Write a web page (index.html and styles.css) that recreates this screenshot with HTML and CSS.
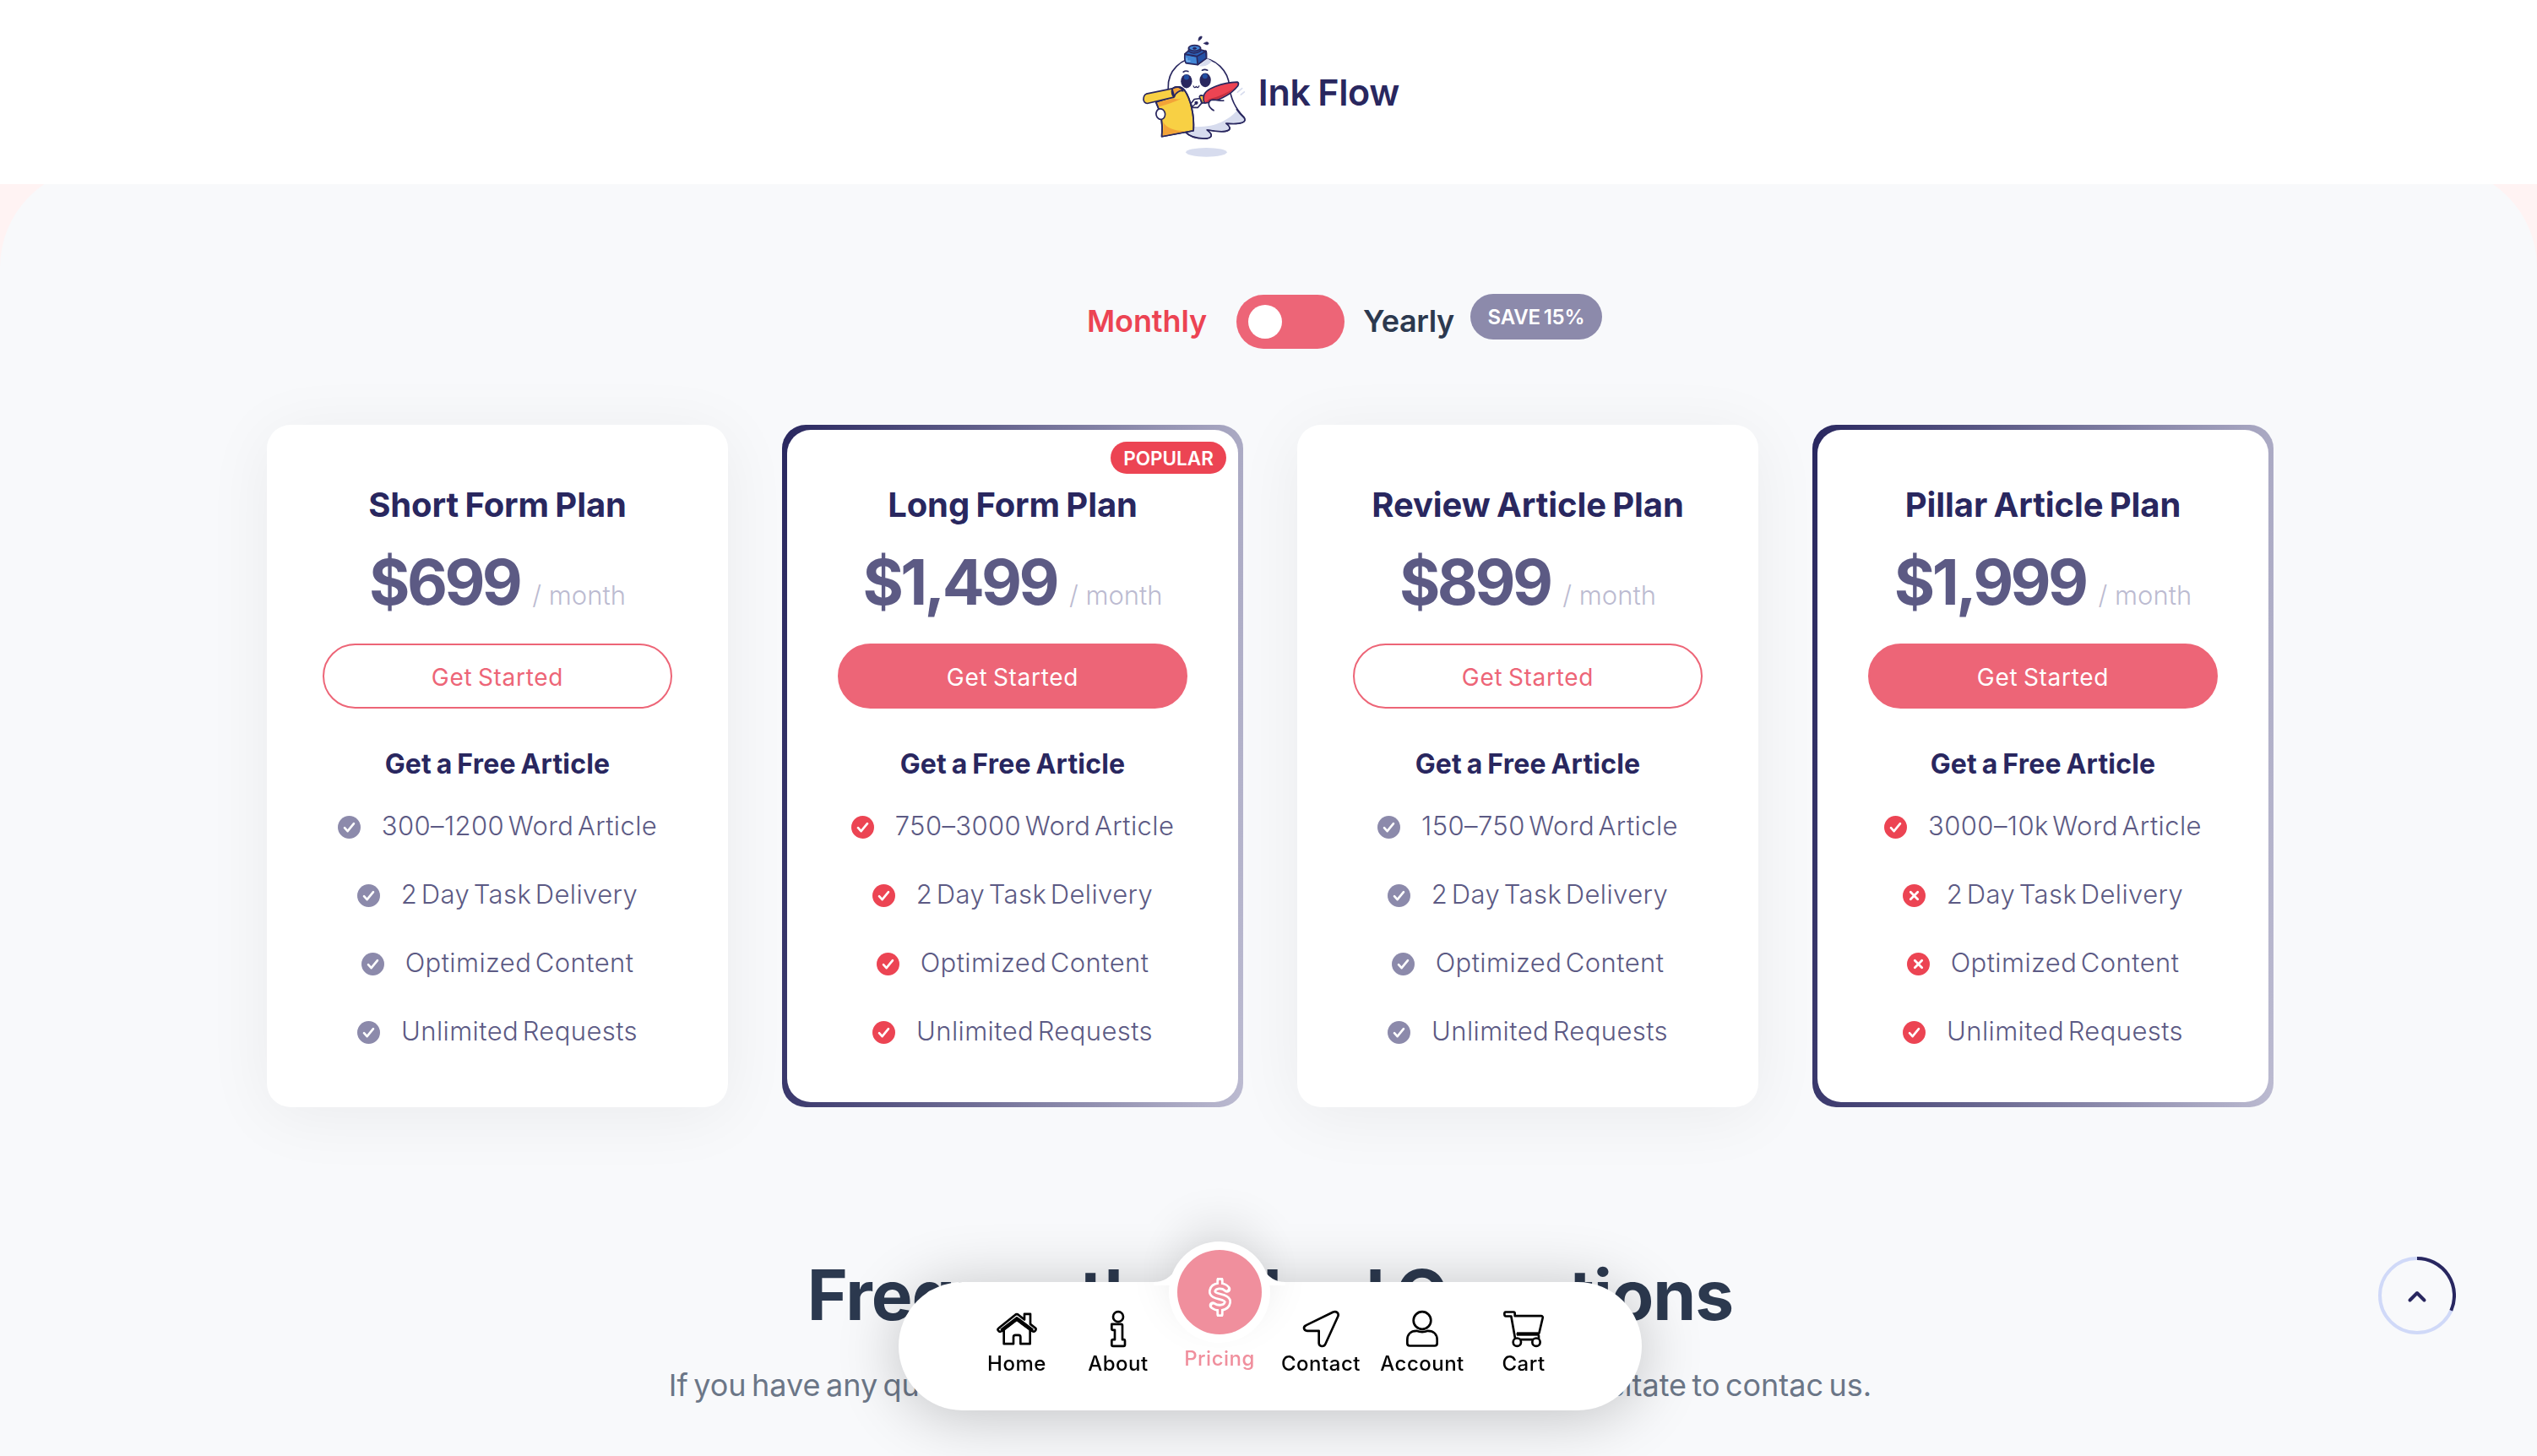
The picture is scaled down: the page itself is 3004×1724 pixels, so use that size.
FILE: index.html
```html
<!DOCTYPE html>
<html lang="en">
<head>
    <meta charset="UTF-8">
    <meta name="viewport" content="width=device-width, initial-scale=1.0">
    <title>Ink Flow - Pricing</title>
    <link rel="stylesheet" href="styles.css">
</head>
<body>
    <!-- shared icons -->
    <svg class="sprite">
        <symbol id="check" viewBox="0 0 27 27">
            <circle cx="13.5" cy="13.5" r="13.5" fill="currentColor"/>
            <path d="M8 14.2l3.6 4 7.4-9" fill="none" stroke="#fff" stroke-width="2.6" stroke-linecap="round" stroke-linejoin="round"/>
        </symbol>
        <symbol id="cross" viewBox="0 0 27 27">
            <circle cx="13.5" cy="13.5" r="13.5" fill="currentColor"/>
            <path d="M9.3 9.3l8.4 8.4M17.7 9.3l-8.4 8.4" fill="none" stroke="#fff" stroke-width="2.8" stroke-linecap="round"/>
        </symbol>
    </svg>

    <header class="header">
        <a class="logo">
            <svg class="logo-img" viewBox="60 37 385 460" fill="none" stroke="#29275f" stroke-width="5" stroke-linejoin="round" stroke-linecap="round">
                <ellipse cx="296" cy="480" rx="73" ry="16" fill="#d7dcee" stroke="none"/>
                <!-- body -->
                <path d="M160 250C158 190 205 143 266 143C330 143 374 190 378 245C382 290 400 325 430 355C440 369 428 382 366 377C392 396 384 416 298 400C324 420 314 431 288 431C255 430 232 420 222 408L160 300Z" fill="#fff"/>
                <path d="M252 389C330 392 372 365 404 333L429 357C438 368 428 381 368 375C392 394 380 414 300 398C322 418 312 429 288 429C258 428 236 419 226 408L250 402Z" fill="#d7dcee" stroke="none"/>
                <path d="M404 327C412 339 420 347 430 357C440 370 428 382 366 377C392 396 384 416 298 400C324 420 314 431 288 431C255 430 232 420 222 408"/>
                <path d="M270 172C290 178 308 166 315 154L298 146Z" fill="#d7dcee" stroke="none"/>
                <!-- face -->
                <ellipse cx="225" cy="227" rx="20" ry="25" fill="#29275f" stroke="none"/>
                <ellipse cx="292" cy="223" rx="20" ry="25" fill="#29275f" stroke="none"/>
                <circle cx="225" cy="213" r="9" fill="#2450a4" stroke="none"/>
                <circle cx="291" cy="209" r="9" fill="#2450a4" stroke="none"/>
                <path d="M214 194Q222 188 231 192M281 188Q290 183 300 188"/>
                <path d="M250 244Q253 254 260 246Q266 254 270 244" stroke-width="4"/>
                <!-- ink pot -->
                <path d="M219 131L257 138L294 119Q298 120 296 145L265 168L225 163Q217 160 219 131Z" fill="#4286d6"/>
                <path d="M262 138L294 120L296 145L265 168Z" fill="#2450a4"/>
                <path d="M219 130L233 118L272 114L294 120L262 138Z" fill="#2c62b8"/>
                <path d="M233 108V120Q250 133 275 120V108Z" fill="#2c62b8"/>
                <ellipse cx="254" cy="109" rx="21" ry="10" fill="#4286d6"/>
                <ellipse cx="254" cy="110" rx="6" ry="3" fill="#29275f" stroke-width="3"/>
                <path d="M226 145V155H238" stroke="#9cc6f2" stroke-width="3"/>
                <path d="M268 82Q266 67 280 67Q281 78 268 82ZM287 92Q300 82 304 92Q301 102 287 92Z" fill="#29275f" stroke-width="2"/>
                <!-- pen -->
                <path d="M274 288L253 291L241 306L246 321L265 321L279 305Z" fill="#fff"/>
                <path d="M245 318L262 303" stroke-width="4"/>
                <circle cx="260" cy="304" r="4" fill="#29275f"/>
                <path d="M272 285Q270 278 277 277L288 279L294 302L282 305Z" fill="#fbc83b"/>
                <path d="M286 284C286 250 360 232 407 230Q413 233 408 244C380 280 330 300 290 305Q284 296 286 284Z" fill="#ed4453"/>
                <path d="M292 302C330 296 375 275 400 248C380 264 340 282 306 290Z" fill="#c2303f" stroke="none"/>
                <path d="M322 331C296 316 302 294 320 293C338 293 345 298 357 296L352 310L330 328Z" fill="#fff" stroke="none"/>
                <path d="M322 331C296 316 302 294 320 293C338 293 345 298 357 296"/>
                <path d="M407 266L423 252M419 275L431 265" stroke="#d7dcee"/>
                <!-- paper -->
                <path d="M116 302C135 340 142 380 137 424L250 403C254 350 240 290 218 259C208 246 192 244 174 254L178 282Z" fill="#f8d044"/>
                <path d="M122 303L178 287Q196 296 214 286Q175 305 127 318ZM139 422Q145 390 142 372Q158 402 222 405Z" fill="#f2a338" stroke="none"/>
                <path d="M174 254C190 243 206 247 213 262C204 258 186 266 182 282Z" fill="#f2a338"/>
                <path d="M174 253L82 272Q72 276 72 292Q74 305 85 306L180 284Q170 270 174 253Z" fill="#f8d044"/>
                <path d="M174 253C188 243 206 245 218 259C240 290 254 350 250 403L137 424C142 380 135 340 118 304"/>
                <ellipse cx="133" cy="344" rx="16" ry="19" fill="#fff" transform="rotate(-12 133 344)"/>
            </svg>
            <span class="logo-text">Ink Flow</span>
        </a>
    </header>

    <main class="page">
        <section class="pricing">
            <div class="switch-row">
                <span class="period period-active">Monthly</span>
                <span class="toggle"><span class="knob"></span></span>
                <span class="period period-yearly">Yearly</span>
                <span class="save">SAVE 15%</span>
            </div>

            <div class="plans">
                <div class="plan">
                    <h3 class="plan-title">Short Form Plan</h3>
                    <div class="price">$699 <small>/ month</small></div>
                    <a class="btn">Get Started</a>
                    <h5 class="plan-sub">Get a Free Article</h5>
                    <ul class="features">
                        <li><svg><use href="#check"/></svg>300–1200 Word Article</li>
                        <li><svg><use href="#check"/></svg>2 Day Task Delivery</li>
                        <li><svg><use href="#check"/></svg>Optimized Content</li>
                        <li><svg><use href="#check"/></svg>Unlimited Requests</li>
                    </ul>
                </div>

                <div class="plan plan-featured">
                    <span class="popular">POPULAR</span>
                    <h3 class="plan-title">Long Form Plan</h3>
                    <div class="price">$1,499 <small>/ month</small></div>
                    <a class="btn">Get Started</a>
                    <h5 class="plan-sub">Get a Free Article</h5>
                    <ul class="features">
                        <li><svg><use href="#check"/></svg>750–3000 Word Article</li>
                        <li><svg><use href="#check"/></svg>2 Day Task Delivery</li>
                        <li><svg><use href="#check"/></svg>Optimized Content</li>
                        <li><svg><use href="#check"/></svg>Unlimited Requests</li>
                    </ul>
                </div>

                <div class="plan">
                    <h3 class="plan-title">Review Article Plan</h3>
                    <div class="price">$899 <small>/ month</small></div>
                    <a class="btn">Get Started</a>
                    <h5 class="plan-sub">Get a Free Article</h5>
                    <ul class="features">
                        <li><svg><use href="#check"/></svg>150–750 Word Article</li>
                        <li><svg><use href="#check"/></svg>2 Day Task Delivery</li>
                        <li><svg><use href="#check"/></svg>Optimized Content</li>
                        <li><svg><use href="#check"/></svg>Unlimited Requests</li>
                    </ul>
                </div>

                <div class="plan plan-featured">
                    <h3 class="plan-title">Pillar Article Plan</h3>
                    <div class="price">$1,999 <small>/ month</small></div>
                    <a class="btn">Get Started</a>
                    <h5 class="plan-sub">Get a Free Article</h5>
                    <ul class="features">
                        <li><svg><use href="#check"/></svg>3000–10k Word Article</li>
                        <li><svg><use href="#cross"/></svg>2 Day Task Delivery</li>
                        <li><svg><use href="#cross"/></svg>Optimized Content</li>
                        <li><svg><use href="#check"/></svg>Unlimited Requests</li>
                    </ul>
                </div>
            </div>
        </section>

        <section class="faq">
            <h2>Frequently Asked Questions</h2>
            <p>If you have any questions not answered in the FAQ, please do not hesitate to contac us.</p>
        </section>
    </main>

    <nav class="navbar">
        <a class="nav-item">
            <svg class="nav-icon" viewBox="420 335 144 134">
                <path d="M446 408V455H480V431Q480 424 487 424H498Q505 424 505 431V455H539V408"/>
                <path d="M437 408L492 366L548 408" stroke-width="14" stroke-linecap="butt"/>
                <path d="M428 399L485 353Q492 347 499 353L519 369V349H540V385L558 399Q562 403 557 409Q552 414 546 409L496 372Q492 369 488 372L438 410Q431 414 427 409Q421 404 428 399Z"/>
            </svg>
            <span>Home</span>
        </a>
        <a class="nav-item">
            <svg class="nav-icon" viewBox="780 335 144 134">
                <circle cx="852" cy="359" r="18"/>
                <path d="M829 385H862Q867 385 867 390V440H872Q876 440 876 445V458Q876 463 871 463H834Q829 463 829 458V445Q829 440 834 440H840V406H834Q829 406 829 401Z"/>
            </svg>
            <span>About</span>
        </a>
        <a class="nav-item nav-active">
            <span class="bubble">
                <svg class="shoulders" viewBox="0 0 156 30">
                    <path d="M0 26Q18 26 28 8L60 30H0ZM156 26Q138 26 128 8L96 30H156Z"/>
                </svg>
                <span class="bubble-disc">
                    <svg class="dollar" viewBox="1166 220 92 138">
                        <path d="M1212 228V248M1212 330V350" stroke-width="25"/>
                        <path d="M1237 260C1225 246 1190 243 1185 267C1182 292 1242 282 1239 307C1235 330 1202 330 1187 318" stroke-width="27"/>
                        <g class="dollar-in">
                            <path d="M1212 232V248M1212 330V346" stroke-width="9"/>
                            <path d="M1235 258C1225 246 1190 243 1185 267C1182 292 1242 282 1239 307C1235 330 1202 330 1189 320" stroke-width="11"/>
                        </g>
                    </svg>
                </span>
            </span>
            <span class="label">Pricing</span>
        </a>
        <a class="nav-item">
            <svg class="nav-icon" viewBox="180 335 144 134">
                <path d="M200 389L296 342C307 338 317 346 313 357L268 456C263 467 246 466 245 453V409H204C190 408 188 394 200 389Z"/>
            </svg>
            <span>Contact</span>
        </a>
        <a class="nav-item">
            <svg class="nav-icon" viewBox="540 335 144 134">
                <circle cx="612" cy="372" r="31"/>
                <path d="M592 409Q612 417 632 409C654 409 665 423 665 441V453Q665 462 656 462H568Q559 462 559 453V441C559 423 570 409 592 409Z"/>
            </svg>
            <span>Account</span>
        </a>
        <a class="nav-item">
            <svg class="nav-icon" viewBox="900 335 144 134">
                <path d="M908 342H937Q941 342 941 347V356H1034Q1041 356 1040 363L1028 414Q1027 420 1022 420H950M908 342Q904 342 904 349Q904 357 909 357H928L942 435Q943 440 950 440H1020Q1026 440 1026 434V426"/>
                <path d="M948 420H1024" stroke-width="13" stroke-linecap="butt"/>
                <circle cx="949" cy="449" r="14" fill="#fff"/>
                <circle cx="1017" cy="449" r="14" fill="#fff"/>
            </svg>
            <span>Cart</span>
        </a>
    </nav>

    <!-- scroll progress -->
    <a class="to-top">
        <svg viewBox="0 0 92 92">
            <circle cx="46" cy="46" r="44" stroke="#d0d9f8"/>
            <path d="M46 2A44 44 0 0 1 86.300 63.700" stroke="#29275f"/>
            <path d="M37.500 51.500L46 43L54.500 51.500" stroke="#29275f" stroke-linecap="round" stroke-linejoin="round"/>
        </svg>
    </a>
</body>
</html>
```
FILE: styles.css
```css
* {
    box-sizing: border-box;
    margin: 0;
    padding: 0;
}
body {
    font-family: Inter, "Noto Sans", sans-serif;
    background-color: #fff3f3;
    height: 1724px;
    overflow: hidden;
}
.sprite {
    position: absolute;
    width: 0;
    height: 0;
}

/* header */
.header {
    position: relative;
    z-index: 2;
    height: 218px;
    padding-left: 3px;
    background-color: #fff;
    display: flex;
    align-items: center;
    justify-content: center;
}
.logo {
    display: flex;
    align-items: center;
    gap: 12px;
}
.logo-img {
    width: 128px;
    height: 153px;
}
.logo-text {
    font-size: 43px;
    font-weight: 600;
    letter-spacing: -0.3px;
    word-spacing: -2px;
    color: #29275f;
}

.page {
    margin-top: -21px;
    height: 1527px;
    padding-left: 4px;
    background-color: #f8f9fb;
    border-radius: 120px 120px 0 0;
}

/* monthly / yearly switch */
.pricing {
    padding-top: 152px;
}
.switch-row {
    position: relative;
    width: 432px;
    height: 64px;
    margin: 0 auto;
    display: flex;
    align-items: center;
}
.period {
    width: 177px;
    margin-left: -1px;
    margin-bottom: 3px;
    font-size: 36px;
    font-weight: 600;
    line-height: 60px;
    letter-spacing: -0.1px;
    color: #2c394f;
}
.period-active {
    color: #ec4453;
}
.period-yearly {
    width: 105px;
    margin-left: 22px;
    letter-spacing: -0.4px;
}
.toggle {
    width: 128px;
    height: 64px;
    flex: none;
    padding: 12px 14px;
    border-radius: 32px;
    background-color: #ed6577;
}
.knob {
    display: block;
    width: 40px;
    height: 40px;
    border-radius: 50%;
    background-color: #fff;
}
.save {
    position: absolute;
    left: 453px;
    top: -1px;
    width: 156px;
    height: 54px;
    border-radius: 27px;
    background-color: #8c8aab;
    color: #fff;
    font-size: 24px;
    font-weight: 600;
    line-height: 55px;
    letter-spacing: -0.2px;
    word-spacing: -2px;
    text-align: center;
    white-space: nowrap;
}

/* plans */
.plans {
    width: 2376px;
    margin: 90px auto 0;
    display: grid;
    grid-template-columns: repeat(4, 546px);
    gap: 64px;
}
.plan {
    position: relative;
    height: 808px;
    padding: 70px 66px 0;
    border-radius: 28px;
    background-color: #fff;
    box-shadow: 0 10px 80px rgba(0, 0, 0, 0.06);
    text-align: center;
}
.plan-featured {
    isolation: isolate;
    background: linear-gradient(95deg, #29275f, #bcbbd1);
    box-shadow: none;
}
.plan-featured::before {
    content: "";
    position: absolute;
    inset: 6px;
    z-index: -1;
    border-radius: 28px;
    background-color: #fff;
}
.popular {
    position: absolute;
    top: 20px;
    right: 20px;
    width: 137px;
    height: 38px;
    border-radius: 19px;
    background-color: #ec4453;
    color: #fff;
    font-size: 22.5px;
    font-weight: 600;
    line-height: 39px;
}
.plan-title {
    margin: 0 -30px;
    font-size: 40px;
    font-weight: 700;
    line-height: 50px;
    letter-spacing: -0.1px;
    word-spacing: -2px;
    color: #29275f;
}
.price {
    height: 96px;
    margin: 18px -30px 0;
    font-size: 74px;
    font-weight: 700;
    line-height: 96px;
    letter-spacing: -3.6px;
    color: #5c5a84;
    white-space: nowrap;
}
.price small {
    margin-left: 1px;
    font-size: 31px;
    font-weight: 300;
    line-height: 1;
    letter-spacing: 0;
    color: #bcbbd1;
}
.btn {
    display: block;
    height: 77px;
    margin-top: 25px;
    border: 2px solid #ed6577;
    border-radius: 39px;
    color: #ed6577;
    font-size: 28px;
    font-weight: 400;
    line-height: 76px;
    letter-spacing: 0.7px;
    word-spacing: -2px;
}
.plan-featured .btn {
    background-color: #ed6577;
    color: #fff;
}
.plan-sub {
    margin-top: 43px;
    font-size: 32px;
    font-weight: 700;
    line-height: 45px;
    letter-spacing: 0.2px;
    word-spacing: -2px;
    color: #29275f;
}
.features {
    margin: 30px -30px 0;
    list-style: none;
    display: flex;
    flex-direction: column;
    gap: 40px;
}
.features li {
    display: flex;
    justify-content: center;
    align-items: center;
    gap: 25px;
    font-size: 31px;
    font-weight: 300;
    line-height: 41px;
    letter-spacing: 0.4px;
    word-spacing: -4.5px;
    color: #5c5a84;
    white-space: nowrap;
}
.features svg {
    width: 27px;
    height: 27px;
    margin-top: 3px;
    color: #8c8aab;
}
.plan-featured .features svg {
    color: #ec4453;
}

/* faq */
.faq {
    margin-top: 175px;
    text-align: center;
}
.faq h2 {
    font-size: 82px;
    font-weight: 700;
    line-height: 96px;
    letter-spacing: -1px;
    word-spacing: -5px;
    color: #2c394f;
}
.faq p {
    margin-top: 33px;
    font-size: 36px;
    line-height: 50px;
    word-spacing: -3.7px;
    color: #6b7687;
}

/* bottom navigation */
.navbar {
    position: fixed;
    left: 50%;
    bottom: 54px;
    width: 880px;
    height: 152px;
    margin-left: -438px;
    padding: 0 80px;
    border-radius: 76px;
    background-color: #fff;
    box-shadow: 0 6px 74px rgba(0, 0, 0, 0.23);
    display: flex;
}
.nav-item {
    width: 120px;
    padding-top: 33px;
    display: flex;
    flex-direction: column;
    align-items: center;
    font-size: 24px;
    font-weight: 500;
    line-height: 38px;
    letter-spacing: 0.5px;
    color: #000;
}
.nav-icon {
    width: 48px;
    height: 45px;
    fill: none;
    stroke: #000;
    stroke-width: 8;
    stroke-linejoin: round;
    stroke-linecap: round;
}
.nav-active {
    position: relative;
    padding-top: 72px;
    color: #f08f9d;
}
.bubble {
    position: absolute;
    top: -48px;
    left: 0;
    width: 120px;
    height: 120px;
    padding: 10px;
    border-radius: 50%;
    background-color: #fff;
    box-shadow: 0 -24px 60px -10px rgba(0, 0, 0, 0.14);
}
.shoulders {
    position: absolute;
    left: -18px;
    top: 22px;
    width: 156px;
    height: 30px;
    fill: #fff;
}
.bubble-disc {
    position: relative;
    z-index: 1;
    display: flex;
    justify-content: center;
    width: 100px;
    height: 100px;
    padding-top: 33px;
    border-radius: 50%;
    background-color: #f08f9d;
}
.dollar {
    width: 31px;
    height: 46px;
    fill: none;
    stroke: #fff;
    stroke-linecap: round;
    stroke-linejoin: round;
}
.dollar-in {
    stroke: #f08f9d;
}
.label {
    position: relative;
    z-index: 1;
}

.to-top {
    position: fixed;
    left: 2816px;
    top: 1488px;
}
.to-top svg {
    display: block;
    width: 92px;
    height: 92px;
    fill: none;
    stroke-width: 4;
}
```
